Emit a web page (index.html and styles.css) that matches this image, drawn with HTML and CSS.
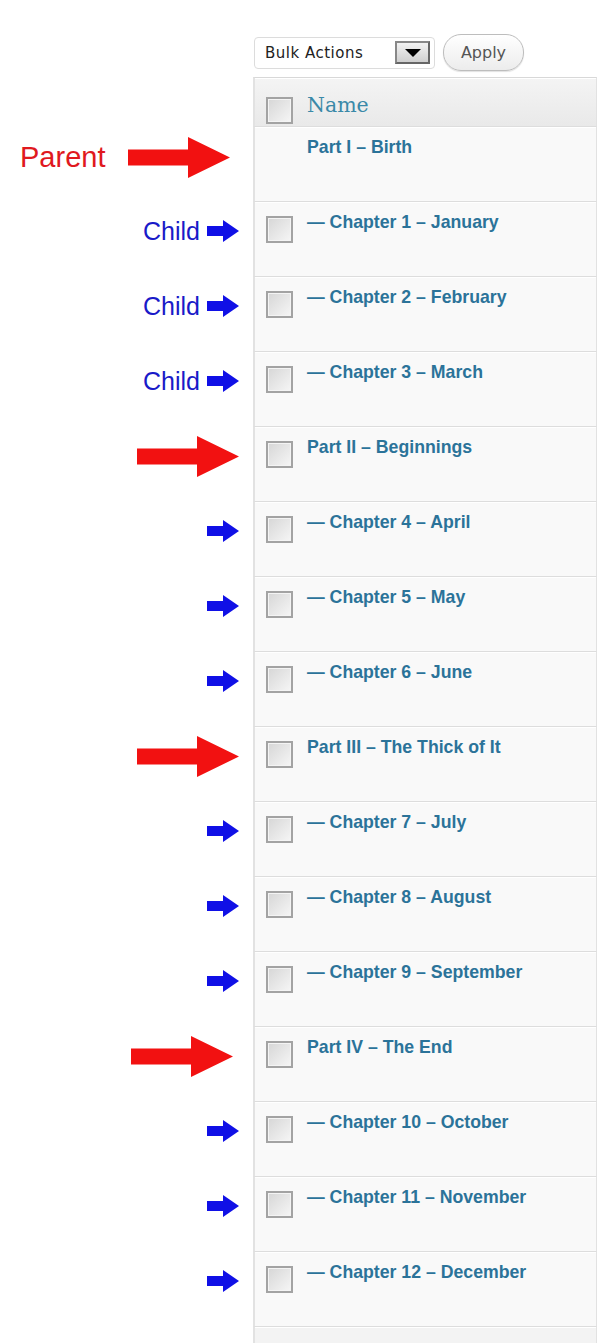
FILE: index.html
```html
<!DOCTYPE html>
<html lang="en">
<head>
    <meta charset="UTF-8">
    <meta name="viewport" content="width=device-width, initial-scale=1.0">
    <title>Pages – Parent and Child</title>
    <link rel="stylesheet" href="styles.css">
</head>
<body>
    <div class="toolbar">
        <div class="bulk">
            <span>Bulk Actions</span>
            <span class="drop"><svg width="16" height="8" viewBox="0 0 16 8"><polygon points="0,0 16,0 8,8" fill="#000"/></svg></span>
        </div>
        <button class="apply">Apply</button>
    </div>

    <div class="list">
        <!-- header -->
        <div class="row">
            <div class="note"></div>
            <div class="cell head">
                <span class="check"></span>
                <span class="col-name">Name</span>
            </div>
        </div>

        <!-- Part I -->
        <div class="row">
            <div class="note note-parent">
                <span class="label-parent">Parent</span>
                <svg class="arrow-red" width="102" height="41" viewBox="0 0 102 41"><polygon points="0,12.5 60,12.5 60,0 102,20.5 60,41 60,28.5 0,28.5"/></svg>
            </div>
            <div class="cell">
                <span class="check-space"></span>
                <a class="title" href="#">Part I – Birth</a>
            </div>
        </div>

        <div class="row">
            <div class="note">
                <span class="label-child">Child</span>
                <svg class="arrow-blue" width="32" height="22" viewBox="0 0 32 22"><polygon points="0,6 16,6 16,0 32,11 16,22 16,16 0,16"/></svg>
            </div>
            <div class="cell"><span class="check"></span><a class="title" href="#">— Chapter 1 – January</a></div>
        </div>
        <div class="row">
            <div class="note">
                <span class="label-child">Child</span>
                <svg class="arrow-blue" width="32" height="22" viewBox="0 0 32 22"><polygon points="0,6 16,6 16,0 32,11 16,22 16,16 0,16"/></svg>
            </div>
            <div class="cell"><span class="check"></span><a class="title" href="#">— Chapter 2 – February</a></div>
        </div>
        <div class="row">
            <div class="note">
                <span class="label-child">Child</span>
                <svg class="arrow-blue" width="32" height="22" viewBox="0 0 32 22"><polygon points="0,6 16,6 16,0 32,11 16,22 16,16 0,16"/></svg>
            </div>
            <div class="cell"><span class="check"></span><a class="title" href="#">— Chapter 3 – March</a></div>
        </div>

        <!-- Part II -->
        <div class="row">
            <div class="note">
                <svg class="arrow-red" width="102" height="41" viewBox="0 0 102 41"><polygon points="0,12.5 60,12.5 60,0 102,20.5 60,41 60,28.5 0,28.5"/></svg>
            </div>
            <div class="cell"><span class="check"></span><a class="title" href="#">Part II – Beginnings</a></div>
        </div>
        <div class="row">
            <div class="note"><svg class="arrow-blue" width="32" height="22" viewBox="0 0 32 22"><polygon points="0,6 16,6 16,0 32,11 16,22 16,16 0,16"/></svg></div>
            <div class="cell"><span class="check"></span><a class="title" href="#">— Chapter 4 – April</a></div>
        </div>
        <div class="row">
            <div class="note"><svg class="arrow-blue" width="32" height="22" viewBox="0 0 32 22"><polygon points="0,6 16,6 16,0 32,11 16,22 16,16 0,16"/></svg></div>
            <div class="cell"><span class="check"></span><a class="title" href="#">— Chapter 5 – May</a></div>
        </div>
        <div class="row">
            <div class="note"><svg class="arrow-blue" width="32" height="22" viewBox="0 0 32 22"><polygon points="0,6 16,6 16,0 32,11 16,22 16,16 0,16"/></svg></div>
            <div class="cell"><span class="check"></span><a class="title" href="#">— Chapter 6 – June</a></div>
        </div>

        <!-- Part III -->
        <div class="row">
            <div class="note">
                <svg class="arrow-red" width="102" height="41" viewBox="0 0 102 41"><polygon points="0,12.5 60,12.5 60,0 102,20.5 60,41 60,28.5 0,28.5"/></svg>
            </div>
            <div class="cell"><span class="check"></span><a class="title" href="#">Part III – The Thick of It</a></div>
        </div>
        <div class="row">
            <div class="note"><svg class="arrow-blue" width="32" height="22" viewBox="0 0 32 22"><polygon points="0,6 16,6 16,0 32,11 16,22 16,16 0,16"/></svg></div>
            <div class="cell"><span class="check"></span><a class="title" href="#">— Chapter 7 – July</a></div>
        </div>
        <div class="row">
            <div class="note"><svg class="arrow-blue" width="32" height="22" viewBox="0 0 32 22"><polygon points="0,6 16,6 16,0 32,11 16,22 16,16 0,16"/></svg></div>
            <div class="cell"><span class="check"></span><a class="title" href="#">— Chapter 8 – August</a></div>
        </div>
        <div class="row">
            <div class="note"><svg class="arrow-blue" width="32" height="22" viewBox="0 0 32 22"><polygon points="0,6 16,6 16,0 32,11 16,22 16,16 0,16"/></svg></div>
            <div class="cell"><span class="check"></span><a class="title" href="#">— Chapter 9 – September</a></div>
        </div>

        <!-- Part IV -->
        <div class="row">
            <div class="note note-shift">
                <svg class="arrow-red" width="102" height="41" viewBox="0 0 102 41"><polygon points="0,12.5 60,12.5 60,0 102,20.5 60,41 60,28.5 0,28.5"/></svg>
            </div>
            <div class="cell"><span class="check"></span><a class="title" href="#">Part IV – The End</a></div>
        </div>
        <div class="row">
            <div class="note"><svg class="arrow-blue" width="32" height="22" viewBox="0 0 32 22"><polygon points="0,6 16,6 16,0 32,11 16,22 16,16 0,16"/></svg></div>
            <div class="cell"><span class="check"></span><a class="title" href="#">— Chapter 10 – October</a></div>
        </div>
        <div class="row">
            <div class="note"><svg class="arrow-blue" width="32" height="22" viewBox="0 0 32 22"><polygon points="0,6 16,6 16,0 32,11 16,22 16,16 0,16"/></svg></div>
            <div class="cell"><span class="check"></span><a class="title" href="#">— Chapter 11 – November</a></div>
        </div>
        <div class="row">
            <div class="note"><svg class="arrow-blue" width="32" height="22" viewBox="0 0 32 22"><polygon points="0,6 16,6 16,0 32,11 16,22 16,16 0,16"/></svg></div>
            <div class="cell"><span class="check"></span><a class="title" href="#">— Chapter 12 – December</a></div>
        </div>

        <!-- start of the next row, cut off by the page edge -->
        <div class="row">
            <div class="note"></div>
            <div class="cell cell-end"></div>
        </div>
    </div>
</body>
</html>
```

FILE: styles.css
```css
body {
    margin: 0;
    background-color: #ffffff;
    font-family: "Liberation Sans", Arial, sans-serif;
}
.toolbar {
    display: flex;
    align-items: center;
    gap: 8px;
    padding: 34px 0 0 254px;
    height: 37px;
}
.bulk {
    display: flex;
    align-items: center;
    justify-content: space-between;
    box-sizing: border-box;
    width: 181px;
    height: 32px;
    padding: 0 4px 0 10px;
    border: 1px solid #dcdcdc;
    border-radius: 4px;
    background-color: #fff;
    font-family: "DejaVu Sans", sans-serif;
    font-size: 15px;
    letter-spacing: 0.5px;
    color: #222;
}
.drop {
    display: flex;
    align-items: center;
    justify-content: center;
    box-sizing: border-box;
    width: 35px;
    height: 23px;
    border: 2px solid #666;
    border-top-color: #888;
    border-left-color: #888;
    background: linear-gradient(#f2f2f2, #cfcfcf);
}
.apply {
    box-sizing: border-box;
    width: 81px;
    height: 37px;
    padding: 0;
    border: 1px solid #bdbdbd;
    border-radius: 18px;
    background: linear-gradient(#ffffff, #ececec);
    box-shadow: 0 1px 1px rgba(0, 0, 0, 0.12);
    font-family: "DejaVu Sans", sans-serif;
    font-size: 16px;
    color: #555;
}
.list {
    margin-top: 6px;
}
.row {
    display: flex;
}
.note {
    display: flex;
    align-items: center;
    justify-content: flex-end;
    gap: 7px;
    box-sizing: border-box;
    width: 253px;
    padding: 0 14px 15px 0;
}
.note-parent {
    justify-content: space-between;
    padding: 0 23px 13px 20px;
}
.note-shift {
    padding-right: 20px;
}
.label-parent {
    font-size: 29px;
    color: #e0191e;
}
.label-child {
    font-size: 25px;
    color: #1a1ac8;
}
.arrow-red {
    fill: #f21111;
}
.arrow-blue {
    fill: #1010e6;
}
.cell {
    display: flex;
    align-items: flex-start;
    gap: 14px;
    box-sizing: border-box;
    width: 344px;
    height: 75px;
    padding: 10px 0 0 11px;
    border-top: 1px solid #dddddd;
    border-left: 2px solid #e2e2e2;
    border-right: 1px solid #e2e2e2;
    background-color: #f9f9f9;
    box-shadow: inset 0 1px 0 #ffffff;
}
.cell.head {
    height: 49px;
    padding-top: 15px;
    border-top-color: #d8d8d8;
    background: linear-gradient(#f4f4f4, #e9e9e9);
}
.cell.head .check {
    margin-top: 4px;
}
.cell-end {
    height: 20px;
    background-color: #f3f3f3;
}
.check,
.check-space {
    flex: none;
    box-sizing: border-box;
    width: 27px;
    height: 27px;
    margin-top: 4px;
}
.check {
    border: 2px solid #a3a3a3;
    background: linear-gradient(135deg, #d6d6d6, #f6f6f6);
    box-shadow: inset 0 0 0 1px #f4f4f4;
}
.col-name {
    font-family: "DejaVu Serif", serif;
    font-size: 20.5px;
    line-height: 24px;
    color: #3a89a8;
}
.title {
    font-size: 17.7px;
    font-weight: bold;
    line-height: 20px;
    color: #2b7399;
    text-decoration: none;
}
```
